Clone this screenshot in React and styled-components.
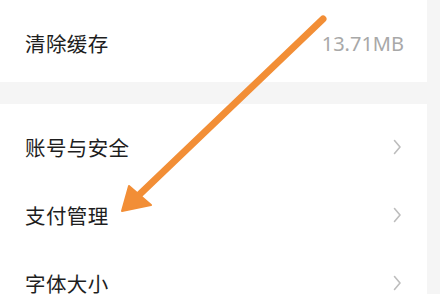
import React from 'react';
import styled, { createGlobalStyle } from 'styled-components';

const GlobalStyle = createGlobalStyle`
  html, body {
    margin: 0;
    padding: 0;
    background: #f5f5f5;
  }
  body {
    font-family: "Noto Sans CJK SC", "Noto Sans", sans-serif;
  }
`;

const Page = styled.div`
  position: relative;
  width: 440px;
  height: 294px;
  overflow: hidden;
  background: #f5f5f5;
  display: flex;
  flex-direction: column;
  gap: 22px;
`;

const Card = styled.div`
  background: #fff;
  margin-right: 13px;
  padding: 9px 0 ${(p) => p.$bottom || 0}px;
  display: flex;
  flex-direction: column;
`;

const Row = styled.div`
  height: 68px;
  display: flex;
  align-items: center;
  justify-content: space-between;
  padding: 0 25px 0 25px;
`;

const Label = styled.span`
  font-size: 20.5px;
  color: #1e1e1e;
  letter-spacing: 0.4px;
`;

const Value = styled.span`
  font-family: "Noto Sans", "Roboto", sans-serif;
  font-size: 20px;
  color: #a8a8a8;
  margin-right: -2px;
`;

const Chevron = () => (
  <svg width="10" height="16" viewBox="0 0 10 16">
    <path d="M2.5 1.5 L8 8 L2.5 14.5" fill="none" stroke="#bdbdbd" strokeWidth="1.6" strokeLinecap="round" strokeLinejoin="round" />
  </svg>
);

const Overlay = styled.svg`
  position: absolute;
  left: 0;
  top: 0;
  pointer-events: none;
`;

const Arrow = () => (
  <Overlay width="440" height="294" viewBox="0 0 440 294">
    <line x1="323" y1="19" x2="140" y2="194" stroke="#f28e36" strokeWidth="7" strokeLinecap="round" />
    <polygon points="122,211 129,186 151,205" fill="#f28e36" stroke="#f28e36" strokeWidth="2" strokeLinejoin="round" />
  </Overlay>
);

const items = ['账号与安全', '支付管理', '字体大小'];

export default function App() {
  return (
    <>
      <GlobalStyle />
      <Page>
        <Card $bottom={5}>
          <Row>
            <Label>清除缓存</Label>
            <Value>13.71MB</Value>
          </Row>
        </Card>
        <Card>
          {items.map((t) => (
            <Row key={t}>
              <Label>{t}</Label>
              <Chevron />
            </Row>
          ))}
        </Card>
        <Arrow />
      </Page>
    </>
  );
}
